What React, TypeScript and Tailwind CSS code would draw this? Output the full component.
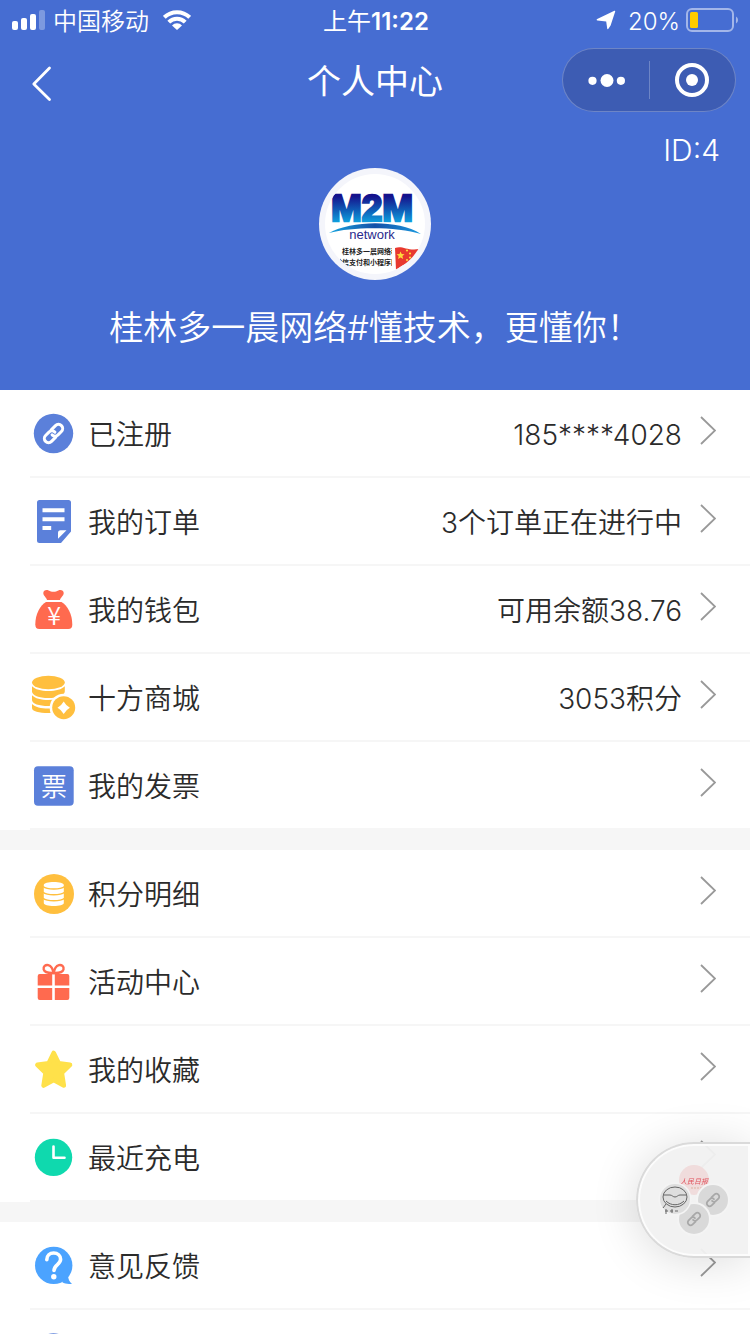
import type { ReactNode } from 'react';

type Item = {
  label: string;
  value?: string;
  icon: ReactNode;
};

const BLUE = '#5b80da';
const RED = '#ff6a4f';
const ORANGE = '#ffbf3e';

const cjk = "'Noto Sans CJK SC', sans-serif";

// two hooked halves of a chain, centred on 0,0
const LINK_HALF = 'M-1 4.200H-7a4.200 4.200 0 0 1 0-8.400H-2.200a4.200 4.200 0 0 1 4.200 4.200';

function Icon({ children }: { children: ReactNode }) {
  return (
    <svg viewBox="0 0 48 48" className="h-12 w-12 shrink-0" aria-hidden="true">
      {children}
    </svg>
  );
}

const registeredIcon = (
  <Icon>
    <circle cx="23.500" cy="24.500" r="19.700" fill={BLUE} />
    <g transform="translate(23.500 24.500) rotate(-45)" fill="none" stroke="#fff" strokeWidth="3" strokeLinecap="round">
      <path d={LINK_HALF} />
      <path d={LINK_HALF} transform="rotate(180)" />
    </g>
  </Icon>
);

const orderIcon = (
  <Icon>
    <path d="M9.500 3h29a2.500 2.500 0 0 1 2.500 2.500V34.500L31 46H9.500A2.500 2.500 0 0 1 7 43.500v-38A2.500 2.500 0 0 1 9.500 3z" fill={BLUE} />
    <path d="M12.500 11.300h22v4h-22zM12.500 20.200h22v4h-22zM12.500 29h8.700v4h-8.700z" fill="#fff" />
    <path d="M30.500 33.200h6l-8.500 8.500v-6a2.500 2.500 0 0 1 2.500-2.500z" fill="#fff" />
  </Icon>
);

const walletIcon = (
  <Icon>
    <path d="M17 15c-.5-2.500-3.700-4.200-3.700-7 0-2.700 3-3.800 5.300-2.600 1.800.9 2.800 1.300 4.900 1.300s3.100-.4 4.900-1.300c2.300-1.200 5.300-.1 5.300 2.600 0 2.800-3.200 4.500-3.700 7z" fill={RED} />
    <path d="M16 17h15.500c6 3.500 10.800 12 10.800 22.500 0 3-1.300 4.500-4 4.500H9.300c-2.700 0-4-1.500-4-4.500C5.300 29 10 20.500 16 17z" fill={RED} />
    <text x="24" y="39.500" textAnchor="middle" fontSize="25" fontFamily={cjk} fill="#fff">¥</text>
  </Icon>
);

const mallIcon = (
  <Icon>
    <ellipse cx="18.400" cy="9.500" rx="16.400" ry="6.800" fill={ORANGE} />
    <g fill={ORANGE}>
      <path d="M2 13.300c3 3.200 9 4.700 16.400 4.700s13.400-1.500 16.400-4.700v5.200c0 3.800-7 6.500-16.400 6.500S2 22.300 2 18.500z" />
      <path d="M2 22.300c3 3.200 9 4.700 16.400 4.700 6 0 10-1 12-2l-4 5c-2 2.500-5 3-8 3C9 33 2 30.800 2 27z" />
      <path d="M2 31c3 3 9 4.600 16.400 4.600h2.200l.4 4.200c-1 .2-2 .2-2.600.2C9 40 2 38.500 2 35z" />
    </g>
    <circle cx="33.700" cy="34.700" r="14" fill="#fff" />
    <circle cx="33.700" cy="34.700" r="11.500" fill={ORANGE} />
    <path d="M33.700 28.500q2.200 4 6.200 6.200-4 2.200-6.200 6.200-2.200-4-6.200-6.200 4-2.200 6.200-6.200z" fill="#fff" />
  </Icon>
);

const invoiceIcon = (
  <Icon>
    <rect x="4" y="5.300" width="39.700" height="39.500" rx="4" fill={BLUE} />
    <text x="24" y="34.500" textAnchor="middle" fontSize="26" fontFamily={cjk} fill="#fff">票</text>
  </Icon>
);

const pointsIcon = (
  <Icon>
    <circle cx="24" cy="25" r="20" fill={ORANGE} />
    <path d="M13.800 16c0-1.800 4.500-3 10-3s10 1.200 10 3v18c0 1.800-4.500 3-10 3s-10-1.200-10-3z" fill="#fff" />
    <g fill="none" stroke={ORANGE} strokeWidth="1.400">
      <path d="M13 17.500c2 1.600 6 2.500 10.800 2.500s8.800-.9 10.800-2.500" />
      <path d="M13 23.300c2 1.600 6 2.500 10.800 2.500s8.800-.9 10.800-2.500" />
      <path d="M13 29.200c2 1.600 6 2.500 10.800 2.500s8.800-.9 10.800-2.500" />
    </g>
  </Icon>
);

const activityIcon = (
  <Icon>
    <g fill={RED}>
      <path d="M9.700 17h12.500v11.500H7.700V19a2 2 0 0 1 2-2zM24.800 17h12.500a2 2 0 0 1 2 2v9.500H24.800z" />
      <path d="M7.700 31h14.500v12H9.700a2 2 0 0 1-2-2zM24.800 31h14.500v10a2 2 0 0 1-2 2H24.800z" />
    </g>
    <g fill="none" stroke={RED} strokeWidth="2.400">
      <path d="M23.500 16c-4 .2-9-.8-9.800-3.600-.7-2.700 1.800-5 4.600-4.300 3 .8 4.700 4.400 5.200 7.900z" />
      <path d="M23.700 16c4 .2 9-.8 9.800-3.600.7-2.700-1.800-5-4.600-4.300-3 .8-4.700 4.400-5.200 7.900z" />
    </g>
  </Icon>
);

const favoriteIcon = (
  <Icon>
    <path
      d="M23.700 8l5 10.300 11.300 1.600-8.200 8 2 12.600-10.100-5.500-10.100 5.500 2-12.600-8.200-8 11.300-1.600z"
      fill="#ffe14a"
      stroke="#ffe14a"
      strokeWidth="4.600"
      strokeLinejoin="round"
    />
  </Icon>
);

const recentIcon = (
  <Icon>
    <circle cx="23.500" cy="24.400" r="18.700" fill="#0fd9ae" />
    <path d="M23.500 13.500v11.200H34.500" fill="none" stroke="#fff" strokeWidth="2.600" strokeLinecap="round" strokeLinejoin="round" />
  </Icon>
);

const feedbackIcon = (
  <Icon>
    <circle cx="23.700" cy="24.400" r="18.700" fill="#4ba3ff" />
    <path d="M38 34c0 4 1.500 7 4 8.700-3.500.6-7 .2-10-1.700z" fill="#4ba3ff" />
    <path d="M16.800 18.800c0-4.300 3-6.800 6.900-6.800s6.900 2.500 6.900 6.300c0 5.200-6.600 5.400-6.600 11.200" fill="none" stroke="#fff" strokeWidth="3.600" strokeLinecap="round" />
    <circle cx="23.800" cy="35.700" r="2.700" fill="#fff" />
  </Icon>
);

const groups: Item[][] = [
  [
    { label: '已注册', value: '185****4028', icon: registeredIcon },
    { label: '我的订单', value: '3个订单正在进行中', icon: orderIcon },
    { label: '我的钱包', value: '可用余额38.76', icon: walletIcon },
    { label: '十方商城', value: '3053积分', icon: mallIcon },
    { label: '我的发票', icon: invoiceIcon },
  ],
  [
    { label: '积分明细', icon: pointsIcon },
    { label: '活动中心', icon: activityIcon },
    { label: '我的收藏', icon: favoriteIcon },
    { label: '最近充电', icon: recentIcon },
  ],
  [{ label: '意见反馈', icon: feedbackIcon }],
];

function StatusBar() {
  return (
    <div className="grid h-10 grid-cols-[1fr_auto_1fr] items-center pl-3 pr-[10px] text-2xl leading-9">
      <div className="flex items-center">
        <svg viewBox="0 0 33 20" className="mr-2 h-5 w-[33px]" fill="#fff" aria-hidden="true">
          <rect x="0" y="11" width="6" height="9" rx="2" />
          <rect x="9" y="8" width="6" height="12" rx="2" />
          <rect x="18" y="4" width="6" height="16" rx="2" />
          <rect x="27" y="0" width="6" height="20" rx="2" opacity="0.3" />
        </svg>
        <span className="pt-1 font-[350]">中国移动</span>
        <svg viewBox="0 0 28 20" className="ml-[14px] h-5 w-7" aria-hidden="true">
          <g fill="none" stroke="#fff" strokeWidth="4">
            <path d="M1.300 7.400a18 18 0 0 1 25.400 0" />
            <path d="M5.800 12.200a11.600 11.600 0 0 1 16.400 0" />
          </g>
          <path d="M9 15.400a7 7 0 0 1 10 0L14 20z" fill="#fff" />
        </svg>
      </div>
      <span className="pt-1">
        上午<span className="font-semibold">11:22</span>
      </span>
      <div className="flex items-center justify-end">
        <svg viewBox="0 0 20 20" className="mr-3 h-5 w-5" fill="#fff" aria-hidden="true">
          <path d="M18.400.8c.6-.2 1 .2.800.8L14.600 15.400l-2.200 3.400c-.4.600-1.100.5-1.200-.2L10.200 11.600 1.400 10.500C.4 10.300.3 9.300 1.200 8.900z" />
        </svg>
        <span className="pt-1 font-[350]">20%</span>
        <svg viewBox="0 0 54 24" className="ml-[6px] h-6 w-[54px]" aria-hidden="true">
          <rect x="1" y="1" width="46" height="22" rx="5" fill="none" stroke="#fff" strokeOpacity="0.500" strokeWidth="2" />
          <rect x="4" y="4" width="8" height="16" rx="1.500" fill="#ffcc00" />
          <path d="M50 8.500a4 4 0 0 1 0 7z" fill="#fff" opacity="0.500" />
        </svg>
      </div>
    </div>
  );
}

function NavBar() {
  return (
    <div className="grid h-20 grid-cols-[1fr_auto_1fr] items-center px-[14px]">
      <button type="button" aria-label="返回" className="h-12 w-12">
        <svg viewBox="0 0 48 48" className="h-12 w-12" fill="none" stroke="#fff" strokeWidth="2.800" strokeLinecap="round" strokeLinejoin="round">
          <path d="M35.500 12L19.800 28l15.700 15.500" />
        </svg>
      </button>
      <h1 className="pt-1 text-[34px] leading-10">个人中心</h1>
      <div className="flex h-16 w-[174px] items-center justify-self-end rounded-full border border-white/25 bg-[#3d5cb3]">
        <button type="button" aria-label="更多" className="flex flex-1 items-center justify-center">
          <svg viewBox="0 0 38 14" className="h-[14px] w-[38px]" fill="#fff">
            <circle cx="5.500" cy="7.800" r="4.100" />
            <circle cx="20" cy="7.500" r="6.500" />
            <circle cx="33.900" cy="7.800" r="4.100" />
          </svg>
        </button>
        <span className="h-[38px] w-px bg-white/25" />
        <button type="button" aria-label="关闭" className="flex flex-1 items-center justify-center">
          <svg viewBox="0 0 36 36" className="h-9 w-9" fill="#fff">
            <circle cx="18" cy="18" r="15" fill="none" stroke="#fff" strokeWidth="4" />
            <circle cx="18" cy="18" r="6" />
          </svg>
        </button>
      </div>
    </div>
  );
}

function Avatar() {
  return (
    <svg viewBox="0 0 112 112" className="h-28 w-28" role="img" aria-label="头像">
      <defs>
        <linearGradient id="logo" x1="0" y1="0" x2="0" y2="1">
          <stop offset="0.200" stopColor="#15128c" />
          <stop offset="0.550" stopColor="#0f5fb8" />
          <stop offset="0.850" stopColor="#0fa3e0" />
        </linearGradient>
        <linearGradient id="swoosh" x1="0" y1="0" x2="1" y2="0">
          <stop offset="0" stopColor="#18a5e0" />
          <stop offset="0.500" stopColor="#1450a8" />
          <stop offset="1" stopColor="#1b9be0" />
        </linearGradient>
        <clipPath id="face">
          <circle cx="56" cy="56" r="50" />
        </clipPath>
        <clipPath id="caption">
          <rect x="21" y="76" width="52" height="30" />
        </clipPath>
      </defs>
      <circle cx="56" cy="56" r="56" fill="#f4f5fb" />
      <circle cx="56" cy="56" r="50" fill="#fff" />
      <g clipPath="url(#face)">
        <text x="53" y="53" textAnchor="middle" fontSize="37" fontWeight="700" fontFamily="'Liberation Sans', sans-serif" fill="url(#logo)" stroke="url(#logo)" strokeWidth="2.600">
          M2M
        </text>
        <path d="M10 65C32 53 78 51 102 66 78 58 34 58 10 65z" fill="#fff" stroke="#fff" strokeWidth="2.500" />
        <path d="M10 65C32 53 78 51 102 66 78 58.500 34 58.500 10 65z" fill="url(#swoosh)" />
        <text x="53" y="71" textAnchor="middle" fontSize="13" fontFamily="'Liberation Sans', sans-serif" fill="#2a2a8c">
          network
        </text>
        <g clipPath="url(#caption)" fontSize="7" fontWeight="700" fontFamily={cjk} fill="#222">
          <text x="23" y="86">桂林多一晨网络科技</text>
          <text x="16" y="97">微信支付和小程序服务</text>
        </g>
        <path d="M76 80c7-3 12 3 24 1l-3 14c-8-2-13 2-20 7z" fill="#e8382f" />
        <path d="M81.500 83.500l1.200 2.600 2.900.2-2.200 1.800.8 2.800-2.700-1.500-2.400 1.500.6-2.800-2.100-1.900 2.900-.2z" fill="#ffd83a" />
        <circle cx="88" cy="82.500" r="1.100" fill="#ffd83a" />
        <circle cx="91" cy="85.500" r="1.100" fill="#ffd83a" />
        <circle cx="91" cy="89.500" r="1.100" fill="#ffd83a" />
        <circle cx="88" cy="92" r="1.100" fill="#ffd83a" />
      </g>
    </svg>
  );
}

function Row({ label, value, icon }: Item) {
  return (
    <li className="ml-[30px] border-b-2 border-[#f6f6f6]">
      <a href="#" className="flex h-[86px] items-center pr-[34px] text-[28px] leading-10 font-[350] text-[#2b2b2b]">
        {icon}
        <span className="ml-[10px] flex-1 pt-1">{label}</span>
        {value && <span className="pt-1">{value}</span>}
        <svg viewBox="0 0 16 34" className="ml-[18px] h-[34px] w-4" fill="none" stroke="#999" strokeWidth="1.800" aria-hidden="true">
          <path d="M1 1l14 13.500L1 28" />
        </svg>
      </a>
    </li>
  );
}

// floating window with the recently opened pages
function FloatingWindow() {
  return (
    <button
      type="button"
      aria-label="浮窗"
      className="fixed right-0 top-[1142px] h-[116px] w-[114px] rounded-l-full border-2 border-r-0 border-[#dadada] bg-[#f1f1f1]/95 shadow-[0_4px_48px_rgba(0,0,0,0.14),inset_0_0_0_2px_#fcfcfc]"
    >
      <svg viewBox="0 0 112 112" className="h-28 w-28" aria-hidden="true">
        <circle cx="56" cy="36" r="15" fill="#f0dcdc" />
        <text x="56" y="40" textAnchor="middle" fontSize="7" fontStyle="italic" fontFamily={cjk} fill="#e0525c">人民日报</text>
        <path d="M53 44h14" stroke="#dcb4a4" strokeWidth="1.200" strokeDasharray="2 1" />
        <circle cx="75" cy="56" r="17" fill="#f4f4f4" />
        <circle cx="75" cy="56" r="15" fill="#d9d9d9" />
        <circle cx="56" cy="75" r="17" fill="#f4f4f4" />
        <circle cx="56" cy="75" r="15" fill="#d9d9d9" />
        <circle cx="37" cy="55" r="16.500" fill="#f4f4f4" />
        <circle cx="37" cy="55" r="15" fill="#dedede" />
        <g fill="none" stroke="#666" strokeWidth="1">
          <ellipse cx="37" cy="53" rx="12" ry="10" />
          <path d="M26 51h6c2 0 3 2 5 2s3-2 5-2h6M28 57c5 5 13 5 18 0M28 60l-3 4M27 67h3M32 67h3M37 67h3M28 65v5M34 65v4" />
        </g>
        <g fill="none" stroke="#a8a8a8" strokeWidth="2.600" strokeLinecap="round">
          <g transform="translate(75 56) rotate(-45) scale(0.680)">
            <path d={LINK_HALF} />
            <path d={LINK_HALF} transform="rotate(180)" />
          </g>
          <g transform="translate(56 75) rotate(-45) scale(0.680)">
            <path d={LINK_HALF} />
            <path d={LINK_HALF} transform="rotate(180)" />
          </g>
        </g>
      </svg>
    </button>
  );
}

export default function App() {
  return (
    <div className="h-screen overflow-hidden bg-[#f6f6f6] font-[Inter,'Noto_Sans_CJK_SC',sans-serif]">
      <header className="bg-[#466dd2] pb-10 text-white">
        <StatusBar />
        <NavBar />
        <p className="mt-3 px-[30px] text-right text-3xl leading-9 font-light">ID:4</p>
        <div className="flex flex-col items-center">
          <Avatar />
          <p className="mt-[26px] text-[34px] leading-[44px] font-[350]">桂林多一晨网络#懂技术，更懂你！</p>
        </div>
      </header>

      <main className="flex flex-col gap-5">
        {groups.map((items, i) => (
          <ul key={i} className="bg-white">
            {items.map((item) => (
              <Row key={item.label} {...item} />
            ))}
            {i === groups.length - 1 && (
              <li className="ml-[30px] flex h-[86px] items-center">
                <Icon>
                  <circle cx="23.500" cy="24.300" r="20" fill={BLUE} />
                </Icon>
              </li>
            )}
          </ul>
        ))}
      </main>

      <FloatingWindow />
    </div>
  );
}
